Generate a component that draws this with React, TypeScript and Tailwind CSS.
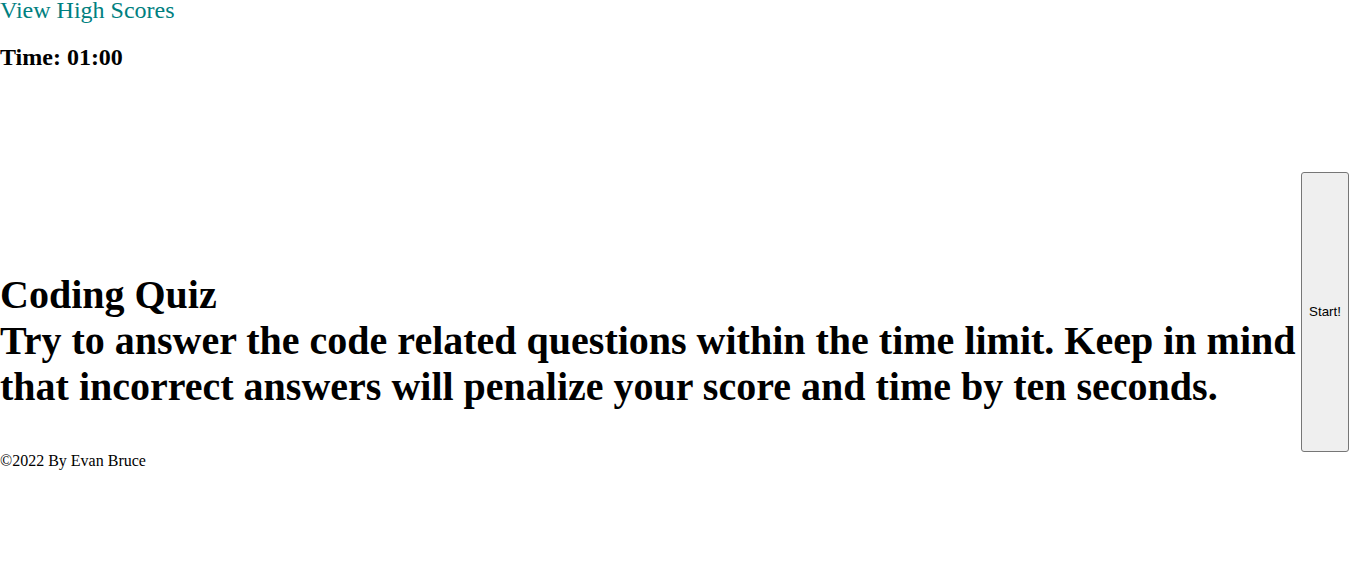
export default function App() {
  return (
    <div className="min-h-[587px] bg-white text-black font-['Liberation_Serif','Times_New_Roman',serif]">
      <header>
        <a href="#" className="block text-[24px] leading-[20px] text-[#008080] no-underline">
          View High Scores
        </a>
        <h3 className="mt-6 text-[24px] font-bold leading-[27.6px]">Time: 01:00</h3>
      </header>

      <main className="mt-[100px] mr-[7px] flex items-end">
        <div className="flex-1 pb-[42px] text-[40px] font-bold leading-[46px]">
          <h1>Coding Quiz</h1>
          <h2>
            Try to answer the code related questions within the time limit. Keep in mind that incorrect
            answers will penalize your score and time by ten seconds.
          </h2>
        </div>
        <button className="h-[280px] w-[48px] shrink-0 rounded-[3px] border border-[#767676] bg-[#efefef] font-['Liberation_Sans',Arial,sans-serif] text-[13.33px] text-black">
          Start!
        </button>
      </main>

      <footer className="text-[16px] leading-[18.4px]">©2022 By Evan Bruce</footer>
    </div>
  );
}
